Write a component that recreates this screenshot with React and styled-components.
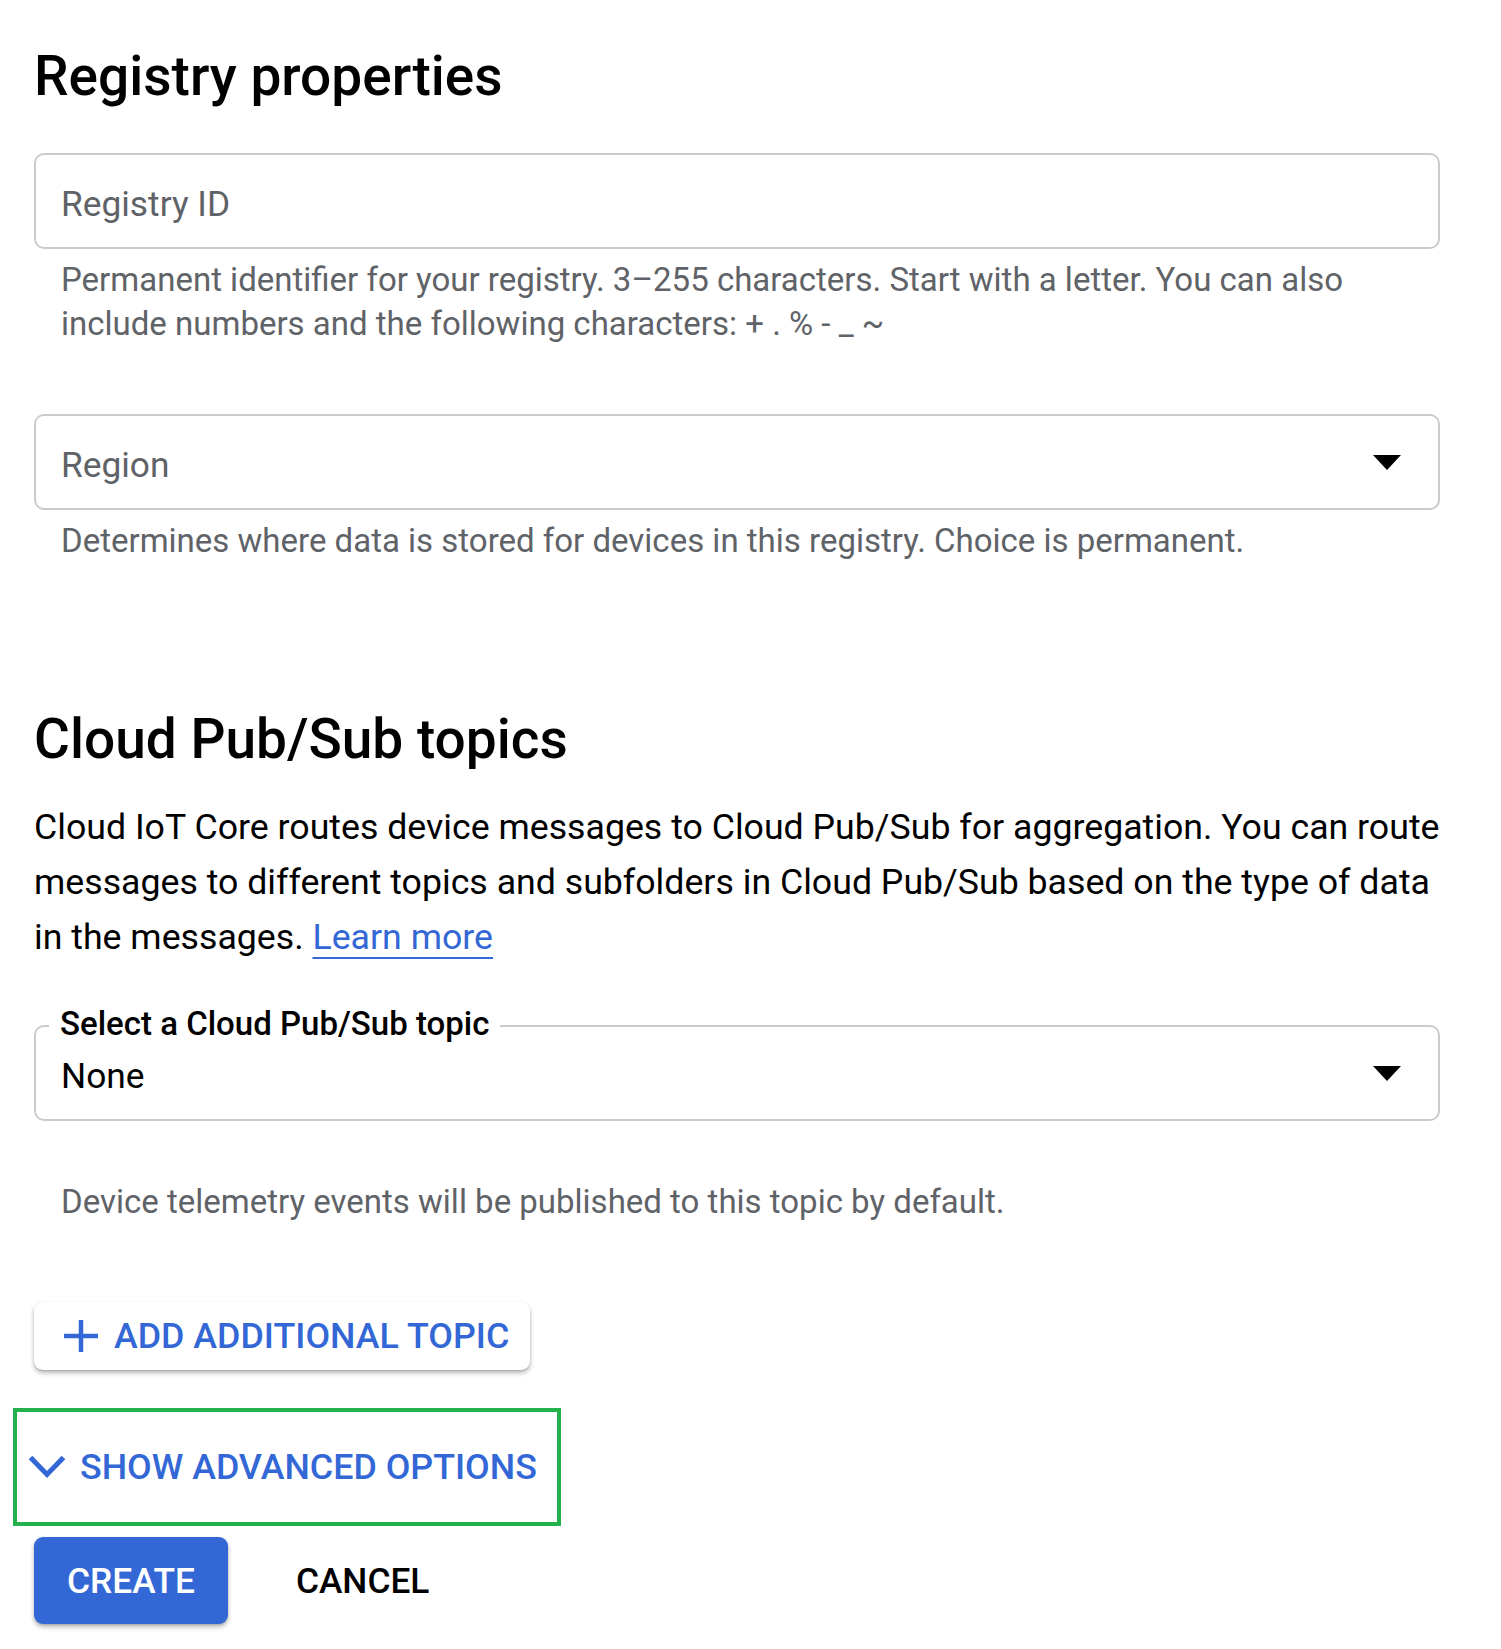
import React from "react";
import styled, { createGlobalStyle } from "styled-components";

const GlobalStyle = createGlobalStyle`
  html, body {
    margin: 0;
    padding: 0;
    background: #ffffff;
  }
  body {
    font-family: Roboto, "Noto Sans", "Liberation Sans", sans-serif;
    color: #202124;
  }
  * {
    box-sizing: border-box;
  }
`;

const Page = styled.main`
  display: flex;
  flex-direction: column;
  align-items: flex-start;
  padding: 44px 61px 40px 34px;
  width: 1501px;
`;

const SectionTitle = styled.h2`
  margin: ${(props) => props.$top || 0}px 0 0 0;
  font-size: 55px;
  line-height: 64px;
  font-weight: 500;
  color: #000000;
`;

const FieldGroup = styled.div`
  align-self: stretch;
  margin-top: ${(props) => props.$top || 0}px;
`;

const OutlinedField = styled.div`
  position: relative;
  display: flex;
  align-items: center;
  justify-content: space-between;
  height: 96px;
  padding: 0 37px 0 25px;
  border: 2px solid #cbcbcb;
  border-radius: 10px;
`;

const FieldValue = styled.span`
  margin-top: 6px;
  font-size: 35.3px;
  line-height: 42px;
  color: ${(props) => (props.$placeholder ? "#5f6368" : "#000000")};
`;

const FloatingLabel = styled.label`
  position: absolute;
  top: -22px;
  left: 13px;
  padding: 0 11px;
  background: #ffffff;
  font-size: 33px;
  line-height: 38px;
  font-weight: 500;
  color: #000000;
`;

const DropArrow = styled.span`
  width: 0;
  height: 0;
  border-left: 14.5px solid transparent;
  border-right: 14.5px solid transparent;
  border-top: 15px solid #000000;
`;

const Hint = styled.p`
  margin: ${(props) => props.$top || 9}px 0 0 0;
  padding: 0 27px;
  font-size: 33px;
  line-height: 44px;
  color: #5f6368;
`;

const Body = styled.p`
  margin: 29px -14px 0 0;
  font-size: 35.7px;
  line-height: 55px;
  color: #000000;
`;

const Link = styled.a`
  color: #3367d6;
  text-decoration: underline;
  text-decoration-thickness: 2px;
  text-underline-offset: 8px;
  cursor: pointer;
`;

const RaisedButton = styled.button`
  display: inline-flex;
  align-items: center;
  gap: 16px;
  height: 68px;
  margin-top: 78px;
  padding: 0 21px 0 30px;
  border: none;
  border-radius: 9px;
  background: #ffffff;
  box-shadow: 0 3px 5px rgba(0, 0, 0, 0.28), 0 1px 2px rgba(0, 0, 0, 0.12);
  font-family: inherit;
  font-size: 35.8px;
  font-weight: 500;
  color: #3367d6;
  text-transform: uppercase;
  cursor: pointer;
`;

const AdvancedToggle = styled.button`
  display: inline-flex;
  align-items: center;
  gap: 14px;
  height: 118px;
  margin: 38px 0 0 -21px;
  padding: 0 20px 0 11px;
  border: 4px solid #24b14d;
  background: #ffffff;
  font-family: inherit;
  font-size: 35.8px;
  font-weight: 500;
  color: #3367d6;
  text-transform: uppercase;
  cursor: pointer;
`;

const Actions = styled.div`
  display: flex;
  align-items: center;
  gap: 35px;
  margin-top: 11px;
`;

const ActionButton = styled.button`
  height: 87px;
  padding: 0 33px;
  border: none;
  border-radius: 9px;
  background: ${(props) => (props.$primary ? "#3367d6" : "transparent")};
  box-shadow: ${(props) =>
    props.$primary
      ? "0 3px 5px rgba(0, 0, 0, 0.28), 0 1px 2px rgba(0, 0, 0, 0.12)"
      : "none"};
  font-family: inherit;
  font-size: 35.3px;
  font-weight: 500;
  color: ${(props) => (props.$primary ? "#ffffff" : "#000000")};
  text-transform: uppercase;
  cursor: pointer;
`;

const PlusIcon = () => (
  <svg width="34" height="32" viewBox="0 0 34 32" aria-hidden="true">
    <path d="M17 0v32M0 16h34" stroke="#3367d6" strokeWidth="4.5" fill="none" />
  </svg>
);

const ChevronIcon = () => (
  <svg width="38" height="24" viewBox="0 0 38 24" aria-hidden="true">
    <polyline
      points="2.5,2.5 19,19.5 35.5,2.5"
      stroke="#3367d6"
      strokeWidth="5"
      fill="none"
    />
  </svg>
);

export default function App() {
  return (
    <>
      <GlobalStyle />
      <Page>
        <SectionTitle>Registry properties</SectionTitle>

        <FieldGroup $top={45}>
          <OutlinedField>
            <FieldValue $placeholder>Registry ID</FieldValue>
          </OutlinedField>
          <Hint>
            Permanent identifier for your registry. 3–255 characters. Start with a
            letter. You can also include numbers and the following characters: + . % - _ ~
          </Hint>
        </FieldGroup>

        <FieldGroup $top={68}>
          <OutlinedField>
            <FieldValue $placeholder>Region</FieldValue>
            <DropArrow />
          </OutlinedField>
          <Hint>
            Determines where data is stored for devices in this registry. Choice is
            permanent.
          </Hint>
        </FieldGroup>

        <SectionTitle $top={144}>Cloud Pub/Sub topics</SectionTitle>
        <Body>
          Cloud IoT Core routes device messages to Cloud Pub/Sub for aggregation. You
          can route messages to different topics and subfolders in Cloud Pub/Sub based
          on the type of data in the messages. <Link>Learn more</Link>
        </Body>

        <FieldGroup $top={60}>
          <OutlinedField>
            <FloatingLabel>Select a Cloud Pub/Sub topic</FloatingLabel>
            <FieldValue>None</FieldValue>
            <DropArrow />
          </OutlinedField>
          <Hint $top={59}>Device telemetry events will be published to this topic by default.</Hint>
        </FieldGroup>

        <RaisedButton>
          <PlusIcon />
          Add additional topic
        </RaisedButton>

        <AdvancedToggle>
          <ChevronIcon />
          Show advanced options
        </AdvancedToggle>

        <Actions>
          <ActionButton $primary>Create</ActionButton>
          <ActionButton>Cancel</ActionButton>
        </Actions>
      </Page>
    </>
  );
}
